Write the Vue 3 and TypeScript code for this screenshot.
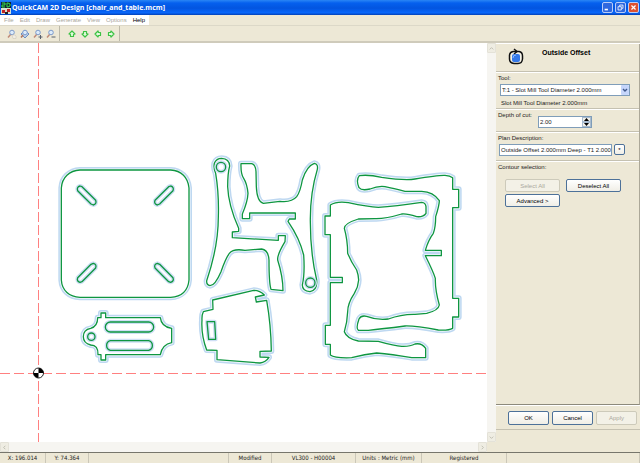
<script setup lang="ts">
import { ref } from 'vue'

interface Part {
  origin: string
  outline: string
  holes: string[]
}

const menus = ['File', 'Edit', 'Draw', 'Generate', 'View', 'Options', 'Help']
const zoomTools = ['Zoom window', 'Zoom extents', 'Zoom in', 'Zoom out']
const arrows = [
  { name: 'Move up', angle: 0 },
  { name: 'Move down', angle: 180 },
  { name: 'Move left', angle: 270 },
  { name: 'Move right', angle: 90 },
]

const tool = ref('T:1 - Slot Mill Tool Diameter 2.000mm')
const depth = ref('2.00')
const description = ref('Outside Offset 2.000mm Deep - T1 2.000')

// Outlines are stored in thirds of a canvas unit, relative to each part's origin.
const parts: Part[] = [
  {
    origin: '50 160',
    outline: 'M90 30H362C394 32 414 52 417 84V360C414 392 394 410 362 412H90C58 410 36 392 34 360V84C36 52 58 32 90 30Z',
    holes: [
      'M96 80L137 121Q141 132 130 135L123 132L83 92Q79 81 90 78Z',
      'M356 80L315 121Q311 132 322 135L329 132L369 92Q373 81 362 78Z',
      'M96 365L137 324Q141 313 130 310L123 313L83 353Q79 364 90 367Z',
      'M356 365L315 324Q311 313 322 310L329 313L369 353Q373 364 362 367Z',
    ],
  },
  {
    origin: '75 305',
    outline: 'M78 24H92V38H256Q259 66 290 70V113Q262 118 256 149H92V165H78V149H69Q70 120 47 120Q25 114 25 95Q25 74 47 70Q68 64 68 38H78Z',
    holes: [
      'M60 95A11 11 0 1 1 38 95A11 11 0 1 1 60 95Z',
      'M106 51H221A15 15 0 0 1 221 81H106A15 15 0 0 1 106 51Z',
      'M106 107H221A15 15 0 0 1 221 136H106A15 15 0 0 1 106 107Z',
    ],
  },
  {
    origin: '195 150',
    outline: 'M62 70Q55 55 58 40Q64 25 80 25Q103 26 104 48Q98 70 98 110Q100 165 131 235V244L112 246V263L250 271V257H271L270 275Q246 315 248 330Q264 380 264 422L228 418Q222 400 222 330Q220 300 200 297L150 301Q115 295 103 310Q92 325 78 365Q60 407 45 407Q34 405 35 392Q70 290 70 200Q72 130 62 70Z',
    holes: ['M92 51A14 14 0 1 1 64 51A14 14 0 1 1 92 51Z'],
  },
  {
    origin: '195 150',
    outline: 'M138 41H170Q182 44 183 65L184 110Q186 155 205 160L255 154Q290 158 305 140Q316 125 322 90Q335 48 358 40Q370 42 367 58Q345 130 346 215Q346 310 365 390Q368 420 345 425Q322 423 322 405Q330 370 326 315Q314 265 279 214L283 207H301V189H164V206H142V192Q158 155 159 130Q156 100 146 85Q137 72 138 41Z',
    holes: ['M360 398A14 14 0 1 1 332 398A14 14 0 1 1 360 398Z'],
  },
  {
    origin: '195 285',
    outline: 'M53 45L176 16Q195 16 208 30L181 36L184 51L215 46Q228 120 229 198L195 199V216L222 217Q212 232 195 234L66 224V196L35 195Q18 150 21 105Q20 90 25 80L54 73Z',
    holes: ['M36 110H59L62 163H41Z'],
  },
  {
    origin: '315 165',
    outline: 'M133 32Q160 28 200 37Q270 47 300 42Q370 30 390 31Q405 32 413 38V73H431V128H413V400H431V456H413V490Q400 497 370 495Q300 482 270 483Q200 492 160 496H130Q122 490 132 462Q138 450 155 454Q190 467 220 462Q260 447 300 448L335 445Q370 437 373 420Q360 375 361 340Q355 320 331 272H379V256H331Q340 225 355 205Q362 185 362 155Q373 120 373 107Q355 80 320 79H270Q235 70 210 65Q190 62 165 72Q140 78 132 68Q122 45 133 32Z',
    holes: [],
  },
  {
    origin: '315 165',
    outline: 'M46 120Q65 108 100 113Q160 126 190 127Q240 124 320 112Q332 113 333 125V145Q325 157 305 155Q275 145 260 147Q210 162 180 161L130 162Q88 175 88 190Q98 225 98 265Q108 290 125 315Q131 332 131 345Q130 365 118 385Q98 415 98 440Q97 470 88 500Q95 520 130 528L190 529Q240 543 260 544Q285 545 300 537Q320 533 332 550V578H290Q230 568 185 564Q150 568 110 578Q60 580 46 570V538H31V481H46V353H82V337H46V209H30V153H46Z',
    holes: [],
  },
]
</script>

<template>
  <div class="window">
    <header class="title">
      <svg class="logo" viewBox="0 0 10 12" aria-hidden="true">
        <rect width="10" height="12" fill="#123" />
        <path d="M1 1h3v2H1v2h3M6 1v4h1l2-1V2L7 1z" fill="none" stroke="#35e04b" />
        <rect x="0" y="6" width="10" height="6" fill="#d8e0d0" />
        <path d="M1 8h3v3H1zM6 7h3v3H6z" fill="#c22323" />
        <path d="M4 10h3v2H4z" fill="#222" />
      </svg>
      <h1>QuickCAM 2D Design [chair_and_table.mcm]</h1>
      <div class="controls">
        <button aria-label="Minimize"><svg viewBox="0 0 11 11"><path d="M2 8h4" stroke="#fff" stroke-width="2" /></svg></button>
        <button aria-label="Restore"><svg viewBox="0 0 11 11"><path d="M4.500 4V2.500h4v4H7M2.500 4.500h4v4h-4z" fill="none" stroke="#fff" /></svg></button>
        <button class="close" aria-label="Close"><svg viewBox="0 0 11 11"><path d="M3 3l5 5M8 3l-5 5" stroke="#fff" stroke-width="1.500" /></svg></button>
      </div>
    </header>

    <nav class="menu">
      <div class="menu-items">
        <button v-for="m in menus" :key="m" :class="{ on: m === 'Help' }">{{ m }}</button>
      </div>
    </nav>

    <div class="toolbar">
      <div class="group">
        <button v-for="(z, i) in zoomTools" :key="z" :aria-label="z">
          <svg viewBox="0 0 10 10">
            <path v-if="i === 1" d="M5 1l4 4-4 4-4-4z" fill="#b9cfe9" stroke="#6d8fc0" />
            <path v-if="i !== 1" d="M4 5L1 8.500" stroke="#c08a78" stroke-width="1.500" />
            <path v-else d="M3 6L1 8.500" stroke="#b0705c" stroke-width="1.500" />
            <circle cx="5" cy="3.500" r="2.300" fill="#dcebfa" stroke="#7d9bcb" />
            <path v-if="i === 0" d="M5 6h3l1 1v2.500H6z" fill="#f2eee5" stroke="#cfc8b8" stroke-width=".6" />
            <path v-if="i === 2" d="M5.500 8h4M7.500 6v4" stroke="#58606c" />
            <path v-if="i === 3" d="M5.500 8h4" stroke="#58606c" />
          </svg>
        </button>
      </div>
      <div class="group">
        <button v-for="a in arrows" :key="a.name" :aria-label="a.name">
          <svg viewBox="0 0 10 10">
            <path :transform="`rotate(${a.angle} 5 5)`" d="M5 2L8 5L6.500 5.500V7.500H3.500V5.500L2 5z" fill="#e4fadd" stroke="#3cc244" stroke-width="1.200" stroke-linejoin="round" />
          </svg>
        </button>
      </div>
    </div>

    <main class="body">
      <section class="view">
        <svg class="canvas" role="img" aria-label="Chair and table contours">
          <g transform="translate(0 -43)">
            <path class="axis" d="M38.500 43V442" />
            <path class="axis flat" d="M0 373.500H487" />
            <g v-for="(p, i) in parts" :key="i" :transform="`translate(${p.origin}) scale(.33333)`">
              <path class="halo" :d="p.outline" />
              <path class="gap" :d="p.outline" />
            </g>
            <g v-for="(p, i) in parts" :key="'c' + i" :transform="`translate(${p.origin}) scale(.33333)`">
              <path class="face" :d="p.outline" />
              <path class="cut" :d="p.outline" />
              <path v-for="h in p.holes" :key="h" class="hole" :d="h" />
              <path v-for="h in p.holes" :key="'i' + h" class="cut" :d="h" />
            </g>
            <circle cx="38.500" cy="373" r="5" fill="#fff" stroke="#222" />
            <path d="M38.500 373V368A5 5 0 0 1 43.500 373ZM38.500 373V378A5 5 0 0 1 33.500 373Z" fill="#000" />
          </g>
        </svg>
        <div class="vbar">
          <button aria-label="Scroll up"><svg viewBox="0 0 8 8"><path d="M2 5l2-2 2 2" /></svg></button>
          <button aria-label="Scroll down"><svg viewBox="0 0 8 8"><path d="M2 3l2 2 2-2" /></svg></button>
        </div>
        <div class="hbar">
          <button aria-label="Scroll left"><svg viewBox="0 0 8 8"><path d="M5 2L3 4l2 2" /></svg></button>
          <button aria-label="Scroll right"><svg viewBox="0 0 8 8"><path d="M3 2l2 2-2 2" /></svg></button>
        </div>
      </section>

      <aside class="side">
        <form class="panel" @submit.prevent>
          <div class="heading">
            <svg viewBox="0 0 16 16" aria-hidden="true">
              <path d="M5 2.500H11Q14.500 3 14.500 7V10Q14 14.500 10 14.500H6Q1.500 14 1.500 10V6Q2 3 5 2.500" fill="#f6f3e8" stroke="#111" stroke-width="1.500" />
              <path d="M6 0l3 2.500L6 5" fill="none" stroke="#111" stroke-width="1.500" />
              <rect x="4" y="5" width="8" height="8" rx="2" fill="#3478e8" />
              <path d="M5 9Q5 6 8 6" fill="none" stroke="#8fbcff" />
            </svg>
            <h2>Outside Offset</h2>
          </div>
          <div class="block tool">
            <label for="tool">Tool:</label>
            <div class="select">
              <select id="tool" v-model="tool"><option>T:1 - Slot Mill Tool Diameter 2.000mm</option></select>
              <svg viewBox="0 0 8 10" aria-hidden="true"><rect width="8" height="10" rx="1" fill="#c6d6fb" /><path d="M2 4l2 2 2-2" fill="none" stroke="#40588c" stroke-width="1.400" /></svg>
            </div>
            <p>Slot Mill Tool Diameter 2.000mm</p>
          </div>
          <div class="block depth">
            <label for="depth">Depth of cut:</label>
            <div class="spin">
              <input id="depth" v-model="depth" type="text" />
              <div class="steps">
                <button type="button" aria-label="Increase"><svg viewBox="0 0 7 3"><path d="M1 3l2.500-3L6 3z" /></svg></button>
                <button type="button" aria-label="Decrease"><svg viewBox="0 0 7 3"><path d="M1 0l2.500 3L6 0z" /></svg></button>
              </div>
            </div>
          </div>
          <div class="block plan">
            <label for="plan">Plan Description:</label>
            <div class="row">
              <input id="plan" v-model="description" type="text" />
              <button type="button" class="push star">*</button>
            </div>
          </div>
          <div class="block contour">
            <span>Contour selection:</span>
            <div class="grid">
              <button type="button" class="push" disabled>Select All</button>
              <button type="button" class="push">Deselect All</button>
              <button type="button" class="push">Advanced &gt;</button>
            </div>
          </div>
        </form>
        <div class="actions">
          <button class="push">OK</button>
          <button class="push">Cancel</button>
          <button class="push" disabled>Apply</button>
        </div>
      </aside>
    </main>

    <footer class="status">
      <span>X: 196.014</span>
      <span>Y: 74.364</span>
      <span></span>
      <span>Modified</span>
      <span>VL300 - H00004</span>
      <span>Units : Metric (mm)</span>
      <span>Registered</span>
      <span></span>
    </footer>
  </div>
</template>

<style>
body {
  margin: 0;
}
</style>

<style scoped>
.window {
  display: flex;
  flex-direction: column;
  height: 100vh;
  overflow: hidden;
  background: #ede8d6;
  color: #222;
  font: 6px/8px "Liberation Sans", Arial, sans-serif;
}
.window * {
  box-sizing: border-box;
}
button,
input,
select {
  margin: 0;
  padding: 0;
  border: 0;
  background: none;
  color: inherit;
  font: inherit;
}
svg {
  display: block;
}
h1,
h2,
p {
  margin: 0;
}
.title {
  display: flex;
  align-items: center;
  gap: 1px;
  flex: none;
  height: 15px;
  padding: 0 1px;
  background: linear-gradient(#2a86f5, #0560ee 20%, #0355e0 55%, #0867fb 85%, #0340b5);
}
.logo {
  width: 10px;
  height: 12px;
}
h1 {
  flex: 1;
  color: #fff;
  font: bold 7px/14px "Open Sans", "DejaVu Sans", sans-serif;
  white-space: nowrap;
}
.controls {
  display: flex;
  gap: 2px;
}
.controls button {
  width: 11px;
  height: 11px;
  border: 1px solid #b9cdf8;
  border-radius: 2px;
  background: #2f68df;
}
.controls .close {
  background: #dd5130;
}
.menu {
  flex: none;
  height: 10px;
}
.menu-items {
  display: flex;
  gap: 6px;
  width: 149px;
  height: 10px;
  padding-left: 4px;
  background: #fff;
  color: #aaa89d;
}
.menu button {
  line-height: 10px;
}
.menu .on {
  color: #000;
}
.toolbar {
  display: flex;
  flex: none;
  height: 18px;
  border-top: 1px solid #dcd8c8;
  border-bottom: 2px solid #cfcbbb;
}
.group {
  display: flex;
  align-items: center;
  gap: 3px;
  width: 60px;
  padding-left: 7px;
  border-right: 1px solid #bcb9a9;
}
.group button {
  width: 10px;
  height: 10px;
}
.body {
  display: flex;
  flex: 1;
  min-height: 0;
}
.view {
  display: grid;
  flex: 1;
  grid-template-columns: 1fr 9px;
  grid-template-rows: 1fr 10px;
  min-width: 0;
}
.canvas {
  width: 100%;
  height: 100%;
  min-height: 0;
  background: #fff;
}
.axis {
  fill: none;
  stroke: #ff8080;
  stroke-dasharray: 10 3;
}
.flat {
  stroke-dasharray: 10 4;
}
.halo,
.gap,
.cut,
.hole {
  fill: none;
  vector-effect: non-scaling-stroke;
  stroke-linejoin: round;
}
.halo {
  stroke: #bed8f1;
  stroke-width: 6px;
}
.gap {
  stroke: #f2f8fd;
  stroke-width: 3px;
}
.face {
  fill: #fff;
}
.hole {
  fill: #fff;
  stroke: #cfdff5;
  stroke-width: 4px;
}
.cut {
  stroke: #0e9640;
  stroke-width: 1.3px;
}
.vbar,
.hbar {
  display: flex;
  justify-content: space-between;
  background: #f6f5f1;
}
.vbar {
  flex-direction: column;
}
.vbar button,
.hbar button {
  width: 9px;
  height: 10px;
  border: 1px solid #e4e2d8;
  border-radius: 1px;
  background: #efede3;
}
.vbar path,
.hbar path {
  fill: none;
  stroke: #b9b8ac;
}
.side {
  display: flex;
  flex-direction: column;
  width: 144px;
  border-top: 1px solid #fff;
  padding-bottom: 22px;
}
.panel {
  flex: 1;
  border-right: 1px solid #aca899;
  border-bottom: 1px solid #8d8a7c;
}
.heading {
  display: flex;
  gap: 18px;
  height: 28px;
  padding: 4px 12px;
  border-bottom: 1px solid #c5c1b1;
}
.heading svg {
  width: 16px;
  height: 18px;
}
h2 {
  font: bold 7px/10px "Liberation Sans", Arial, sans-serif;
  color: #000;
}
.block {
  padding: 1px 2px 0;
  border-top: 1px solid #fff;
  border-bottom: 1px solid #c5c1b1;
  white-space: nowrap;
}
.tool {
  height: 37px;
}
.tool label {
  display: block;
}
.tool p {
  padding: 3px;
}
.select {
  position: relative;
  width: 130px;
  margin: 2px 2px 0;
}
.select select {
  display: block;
  width: 100%;
  height: 12px;
  padding-left: 1px;
  border: 1px solid #7f9db9;
  background: #fff;
  appearance: none;
}
.select svg {
  position: absolute;
  top: 1px;
  right: 1px;
  width: 8px;
  height: 10px;
  pointer-events: none;
}
.depth {
  display: flex;
  gap: 6px;
  height: 23px;
}
.spin {
  display: flex;
  width: 54px;
  height: 12px;
  margin-top: 5px;
  border: 1px solid #7f9db9;
  background: #fff;
}
.spin input {
  flex: 1;
  min-width: 0;
  padding-left: 1px;
}
.steps {
  display: flex;
  flex-direction: column;
  width: 9px;
}
.steps button {
  flex: 1;
  min-height: 0;
  border: 1px solid #a9bcd0;
  background: #f2f1ea;
}
.steps svg {
  width: 7px;
  height: 3px;
}
.plan {
  height: 29px;
}
.plan .row {
  display: flex;
  gap: 2px;
  padding-left: 1px;
  margin-top: 2px;
}
.plan input {
  width: 113px;
  height: 12px;
  padding-left: 1px;
  border: 1px solid #7f9db9;
  background: #fff;
}
.push {
  height: 13px;
  border: 1px solid #4d7199;
  border-radius: 2px;
  background: linear-gradient(#fff, #f0eee6);
  color: #000;
  text-align: center;
}
.push:disabled {
  border-color: #cdcaba;
  background: #f3f1e7;
  color: #aaa89d;
}
.star {
  width: 11px;
  height: 11px;
}
.contour {
  border-bottom: 0;
}
.grid {
  display: grid;
  grid-template-columns: 55px 55px;
  gap: 2px 6px;
  padding: 8px 7px;
}
.actions {
  display: flex;
  gap: 3px;
  height: 25px;
  padding: 5px 3px 0 12px;
  border-top: 1px solid #fff;
  border-bottom: 1px solid #c5c1b1;
}
.actions .push {
  flex: 1;
  height: 14px;
}
.status {
  display: grid;
  flex: none;
  grid-template-columns: 46px 43px 140px 43px 84px 66px 85px 1fr;
  height: 11px;
  border-top: 1px solid #77766c;
  font: 6px/9px "DejaVu Sans Condensed", "DejaVu Sans", sans-serif;
  text-align: center;
  white-space: nowrap;
}
.status span {
  border-right: 1px solid #cbc7b8;
}
</style>
